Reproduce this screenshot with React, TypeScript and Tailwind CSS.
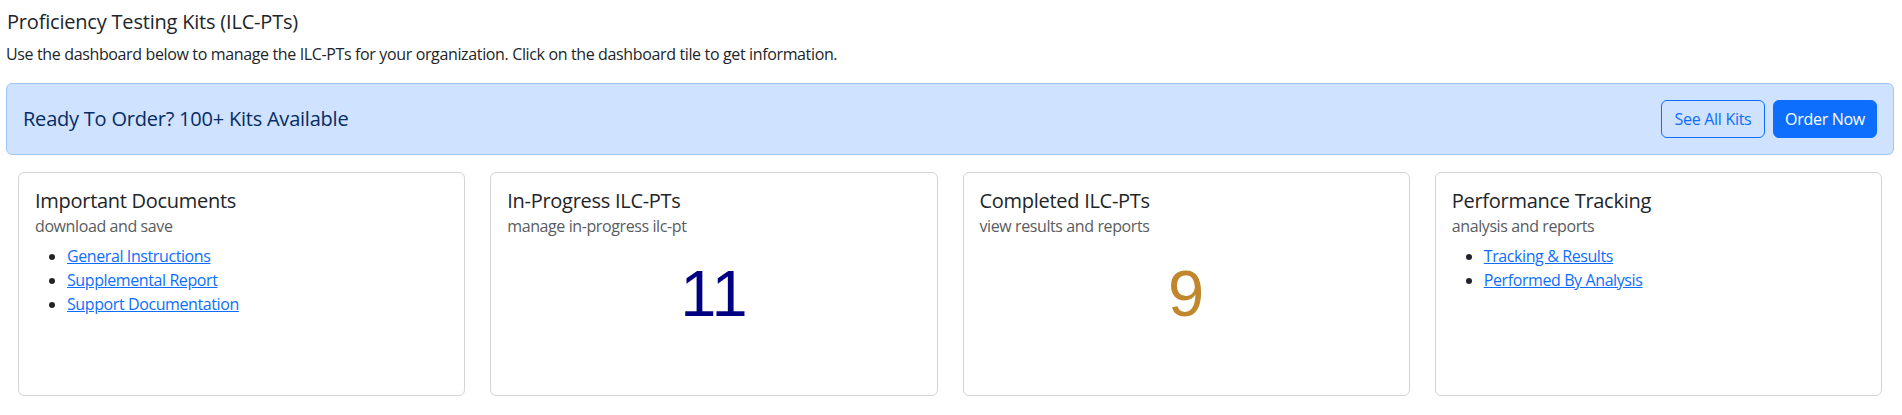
const docLinks = ['General Instructions', 'Supplemental Report', 'Support Documentation'];
const perfLinks = ['Tracking & Results', 'Performed By Analysis'];

function Card({ title, subtitle, children }: { title: string; subtitle: string; children: React.ReactNode }) {
  return (
    <div className="h-[224px] rounded-[6px] border border-[#d3d4d5] bg-white p-4">
      <h5 className="text-[20px] leading-[24px] font-medium tracking-[-0.28px] text-[#212529] mb-1">{title}</h5>
      <h6 className="text-[16px] leading-[19px] font-medium tracking-[-0.4px] text-[#595c5f]">{subtitle}</h6>
      {children}
    </div>
  );
}

function LinkList({ items }: { items: string[] }) {
  return (
    <ul className="mt-2 list-disc pl-8 text-[16px] leading-6 tracking-[-0.4px] marker:text-[#212529]">
      {items.map(item => (
        <li key={item}>
          <a href="#" className="text-[#0d6efd] underline">{item}</a>
        </li>
      ))}
    </ul>
  );
}

export default function App() {
  return (
    <div className="min-h-screen bg-white pl-[6px] pr-[8px] pt-[10px] font-['Open_Sans',sans-serif] text-[#212529]">
      <h5 className="text-[20px] leading-[24px] font-medium tracking-[-0.2px] mb-2 pl-px">Proficiency Testing Kits (ILC-PTs)</h5>
      <p className="text-[16px] leading-6 tracking-[-0.36px] mb-[17px]">
        Use the dashboard below to manage the ILC-PTs for your organization. Click on the dashboard tile to get information.
      </p>

      <div className="flex items-center justify-between h-[72px] rounded-[6px] border border-[#9ec5fe] bg-[#cfe2ff] px-4">
        <h5 className="text-[20px] font-medium tracking-[-0.22px] text-[#052c65]">Ready To Order? 100+ Kits Available</h5>
        <div className="flex gap-2">
          <button className="w-[104px] h-[38px] flex items-center justify-center rounded-[6px] border border-[#0d6efd] text-[16px] tracking-[-0.3px] text-[#0d6efd]">See All Kits</button>
          <button className="w-[104px] h-[38px] flex items-center justify-center rounded-[6px] border border-[#0d6efd] bg-[#0d6efd] text-[16px] tracking-[-0.3px] text-white">Order Now</button>
        </div>
      </div>

      <div className="mt-[17px] px-3 grid grid-cols-4 gap-[25px]">
        <Card title="Important Documents" subtitle="download and save">
          <LinkList items={docLinks} />
        </Card>
        <Card title="In-Progress ILC-PTs" subtitle="manage in-progress ilc-pt">
          <div className="mt-[25px] text-center text-[65px] leading-none font-['Liberation_Sans',sans-serif] text-[#000080]">11</div>
        </Card>
        <Card title="Completed ILC-PTs" subtitle="view results and reports">
          <div className="mt-[25px] text-center text-[65px] leading-none font-['Liberation_Sans',sans-serif] text-[#c0872c]">9</div>
        </Card>
        <Card title="Performance Tracking" subtitle="analysis and reports">
          <LinkList items={perfLinks} />
        </Card>
      </div>
    </div>
  );
}
